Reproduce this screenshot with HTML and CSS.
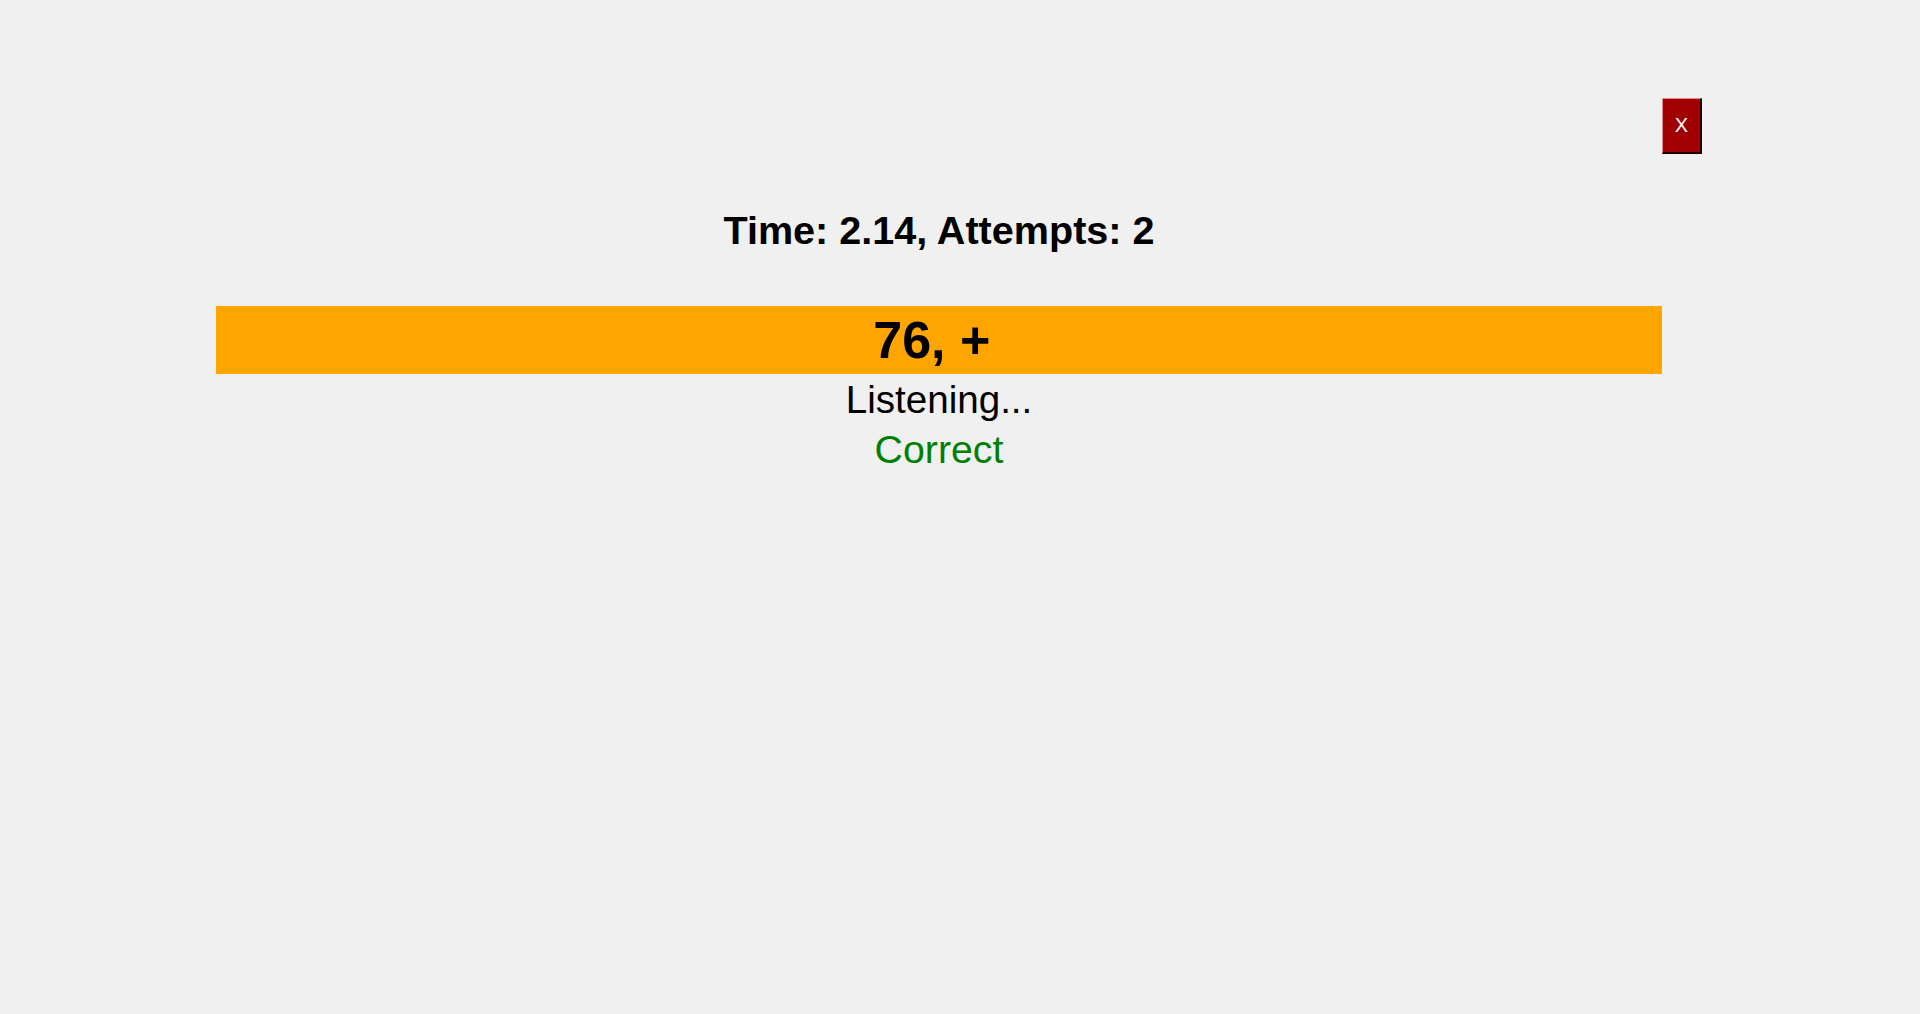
FILE: index.html
```html
<!DOCTYPE html>
<html lang="en">
<head>
<meta charset="utf-8">
<title>Quiz</title>
<link rel="stylesheet" href="styles.css">
</head>
<body>
<div class="page">
  <div class="main">
    <div class="stats">Time: 2.14, Attempts: 2</div>
    <div class="question">76, +&nbsp;</div>
    <div class="status">Listening...</div>
    <div class="result">Correct</div>
  </div>
  <button class="close" type="button">X</button>
</div>
</body>
</html>
```

FILE: styles.css
```css
html, body {
  margin: 0;
  padding: 0;
  background: #f0f0f0;
  font-family: "Liberation Sans", Arial, sans-serif;
  color: #000;
}

.page {
  display: flex;
  justify-content: center;
  align-items: flex-start;
  padding-top: 98px;
  padding-right: 2px;
}

.main {
  width: 1446px;
  display: flex;
  flex-direction: column;
  align-items: center;
}

.stats {
  margin-top: 109px;
  margin-bottom: 53px;
  font-size: 39.6px;
  line-height: 46px;
  font-weight: bold;
}

.question {
  align-self: stretch;
  background: #ffa500;
  text-align: center;
  font-size: 52px;
  line-height: 58px;
  padding: 5px 0;
  font-weight: bold;
}

.status {
  margin-top: 3px;
  font-size: 38.6px;
  line-height: 45px;
}

.result {
  margin-top: 5px;
  font-size: 39.3px;
  line-height: 45px;
  color: #008000;
}

.close {
  width: 40px;
  height: 56px;
  padding: 0;
  margin: 0;
  background: #a00000;
  color: #fff;
  font-family: "Liberation Sans", Arial, sans-serif;
  font-size: 20px;
  border-style: solid;
  border-width: 1px 2px 2px 1px;
  border-color: #e88a8a #1a0000 #1a0000 #e88a8a;
  box-sizing: border-box;
}
```
